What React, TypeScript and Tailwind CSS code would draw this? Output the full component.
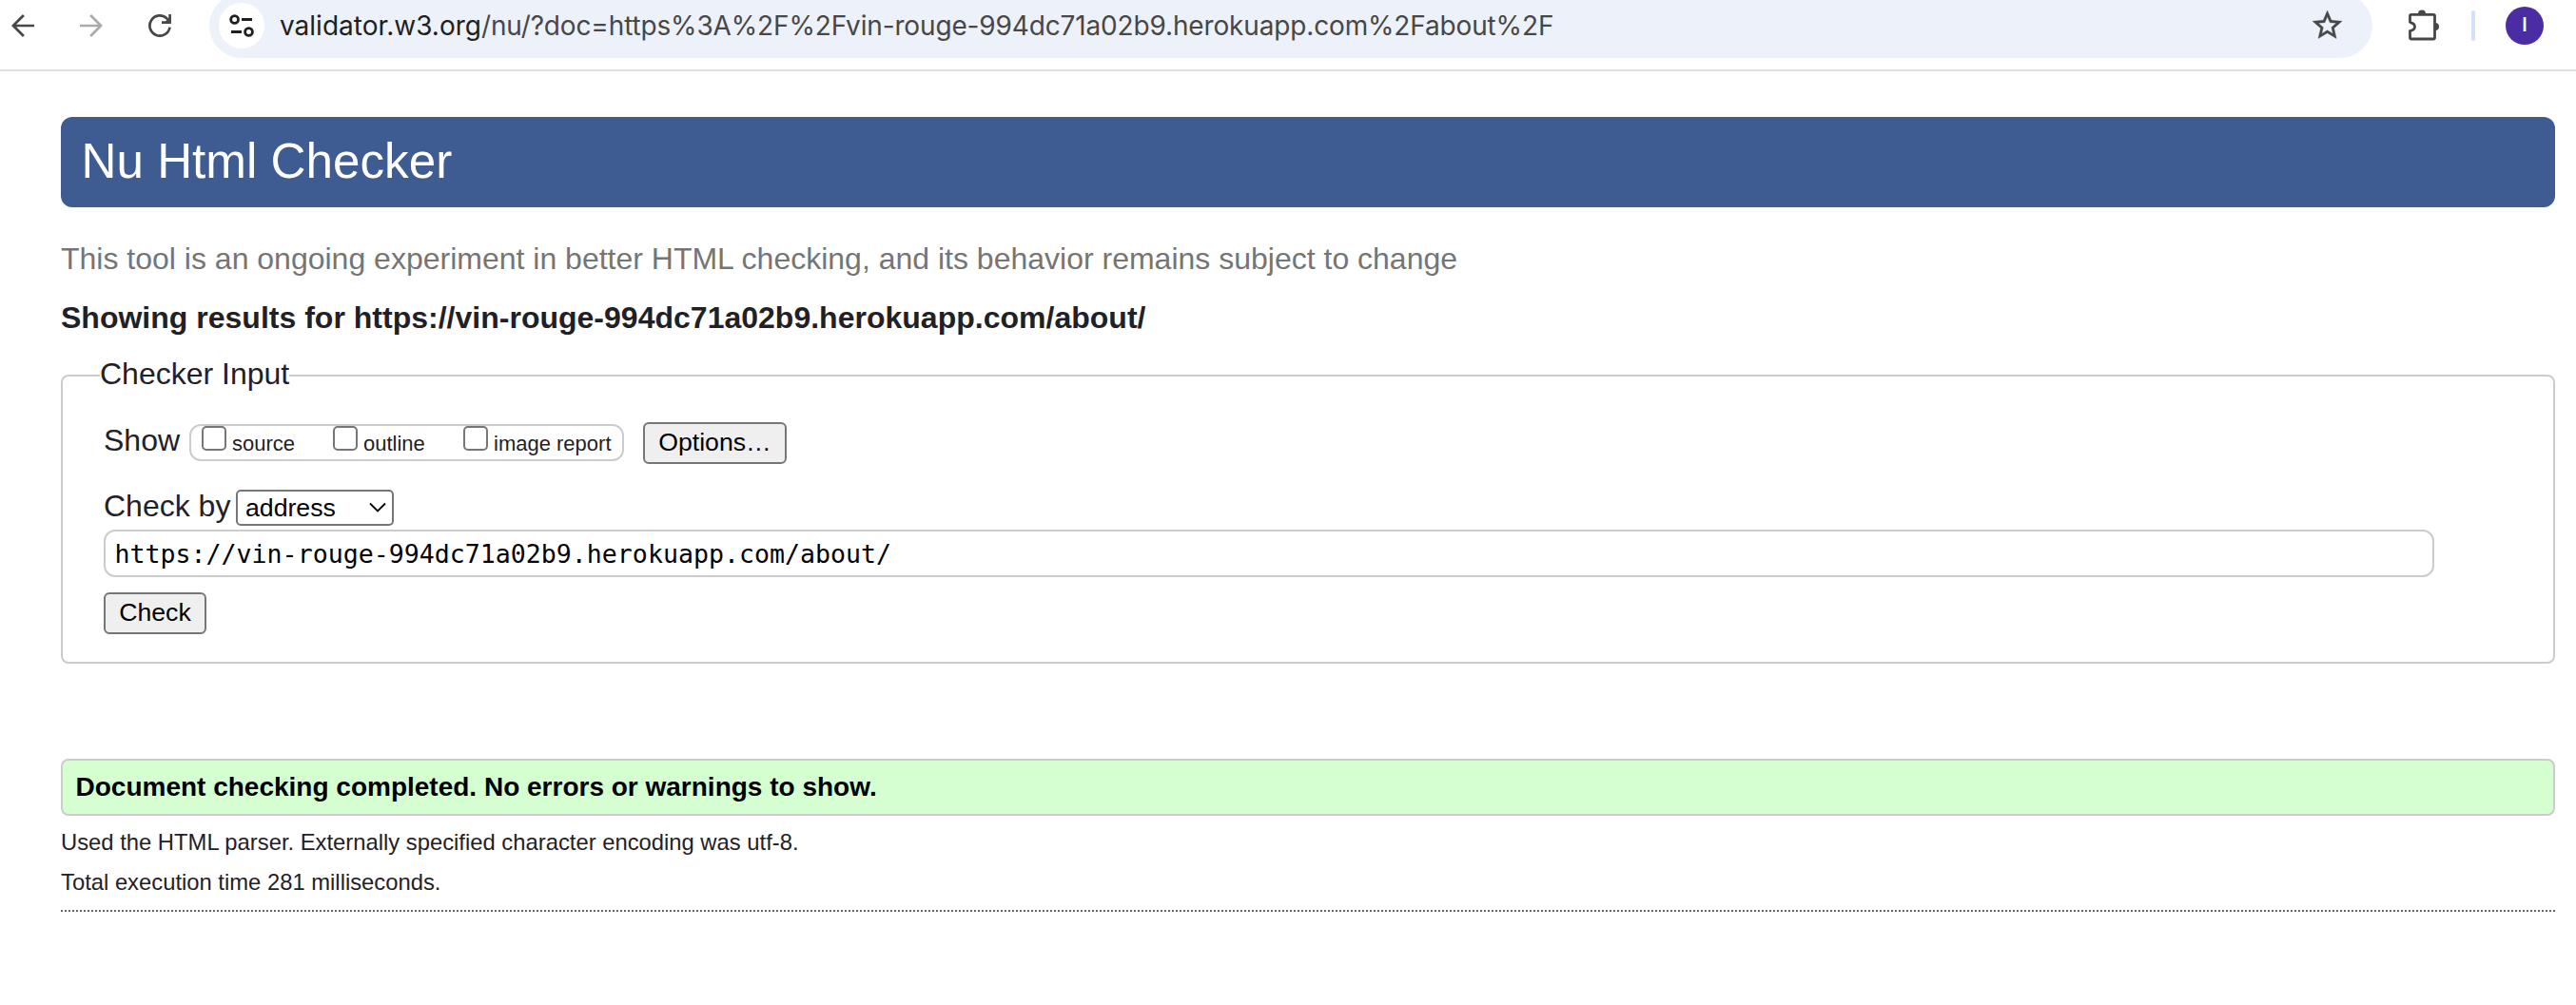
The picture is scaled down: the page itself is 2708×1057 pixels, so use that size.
import React from "react";

function BackIcon({ className }: { className: string }) {
  return (
    <svg viewBox="0 0 24 24" className={className} fill="none" stroke="currentColor" strokeWidth="2.7">
      <path d="M24 12H2M12.9 1L1.9 12l11 11" />
    </svg>
  );
}

function ReloadIcon() {
  return (
    <svg viewBox="0 0 24 24" className="ml-12 size-6 shrink-0 text-[#474747]" fill="none" stroke="currentColor" strokeWidth="2.7">
      <path d="M22.5 13.6A10.6 10.6 0 1 1 19.6 4.6L22 7.4" />
      <path d="M22.6 0V8.6H14" />
      <path d="M22 3.5V8.5H17z" fill="currentColor" stroke="none" />
    </svg>
  );
}

function TuneIcon() {
  return (
    <svg viewBox="0 0 48 48" className="size-12" fill="none" stroke="#1f1f1f" strokeWidth="2.8">
      <circle cx="16.6" cy="17.5" r="3.9" />
      <path d="M24 17.5H35M13 30.5H24" />
      <circle cx="31.5" cy="30.5" r="3.9" />
    </svg>
  );
}

function StarIcon() {
  return (
    <svg viewBox="0 0 24 24" className="mr-[29px] size-[37.2px]" fill="#474747" stroke="#474747" strokeWidth="0.25">
      <path d="M22 9.24l-7.19-.62L12 2 9.19 8.63 2 9.24l5.46 4.73L5.82 21 12 17.27 18.18 21l-1.63-7.03L22 9.24zM12 15.4l-3.76 2.27 1-4.28-3.32-2.88 4.38-.38L12 6.1l1.71 4.04 4.38.38-3.32 2.88 1 4.28L12 15.4z" />
    </svg>
  );
}

function PuzzleIcon() {
  return (
    <svg viewBox="0 0 34 34" className="ml-[37px] size-[34px]" fill="none" stroke="#474747" strokeWidth="2.8">
      <path d="M2.5 14.2V6.8Q2.5 5.4 3.9 5.4H27.1Q28.5 5.4 28.5 6.8V29.6Q28.5 31 27.1 31H3.9Q2.5 31 2.5 29.6V22.6C5.6 21.8 7.5 20.4 7.5 18.2S5.6 14.2 2.5 13.6" />
      <path d="M11 4.5a4 4 0 0 1 8 0zM29 14a4 4 0 0 1 0 8z" fill="#474747" stroke="none" />
    </svg>
  );
}

function Toolbar() {
  return (
    <div className="flex h-[75px] items-start overflow-hidden border-b-2 border-[#e1e1e1]">
      <div className="flex h-[54px] w-full items-center">
        <BackIcon className="ml-3 size-6 shrink-0 text-[#474747]" />
        <BackIcon className="ml-12 size-6 shrink-0 rotate-180 text-[#ababab]" />
        <ReloadIcon />
        <div className="ml-10 flex h-[68px] w-[2274px] shrink-0 items-center rounded-full bg-[#edf2fa] pl-2.5">
          <span className="flex size-12 items-center justify-center rounded-full bg-white">
            <TuneIcon />
          </span>
          <span className="ml-4 flex-1 whitespace-nowrap font-['Inter',sans-serif] text-[28px] leading-[54px] text-[#1f1f1f]">
            validator.w3.org
            <span className="tracking-[-0.15px] text-[#474747]">
              /nu/?doc=https%3A%2F%2Fvin-rouge-994dc71a02b9.herokuapp.com%2Fabout%2F
            </span>
          </span>
          <StarIcon />
        </div>
        <PuzzleIcon />
        <span className="ml-[33px] h-8 w-1 rounded-full bg-[#d3e1fb]" />
        <span className="ml-8 flex size-10 items-center justify-center rounded-full bg-[#4c2ca3] font-['Roboto',sans-serif] text-[21px] font-medium text-white">
          I
        </span>
      </div>
    </div>
  );
}

const boxes = [
  { label: "source", place: "ml-[11px] w-[99px]" },
  { label: "outline", place: "ml-[39px] w-[98px]" },
  { label: "image report", place: "ml-[39px] w-[155px]" },
];

function ShowRow() {
  return (
    <div className="mt-[25px] flex items-start">
      <span className="w-[90px] text-[32px] leading-[38px]">Show</span>
      <div className="mt-[2px] flex h-[39px] w-[457px] rounded-xl border-2 border-[#ccc]">
        {boxes.map((b) => (
          <label key={b.label} className={`flex shrink-0 whitespace-nowrap ${b.place}`}>
            <input type="checkbox" className="size-[26px] shrink-0 appearance-none rounded-[5px] border-2 border-[#767676] bg-white" />
            <span className="ml-1.5 text-[22px] leading-[37px]">{b.label}</span>
          </label>
        ))}
      </div>
      <button className="ml-5 h-11 w-[151px] rounded-md border-2 border-[#767676] bg-[#efefef] pb-0.5 text-[26.67px] leading-[38px] text-black">
        Options…
      </button>
    </div>
  );
}

export default function App() {
  return (
    <div className="h-[1057px] overflow-hidden bg-white font-['Liberation_Sans',Arial,sans-serif] text-[#1f2126]">
      <Toolbar />
      <main className="ml-16 mr-[22px]">
        <h1 className="mt-12 h-[95px] rounded-xl bg-[#3e5c91] pl-[21.5px] text-[51.2px] leading-[94px] text-white">
          Nu Html Checker
        </h1>
        <p className="mt-[30px] text-[32px] leading-[48px] text-[#757575]">
          This tool is an ongoing experiment in better HTML checking, and its behavior remains subject to change
        </p>
        <h2 className="mt-3.5 text-[32px] font-bold leading-[48px] tracking-[0.01px]">
          Showing results for https://vin-rouge-994dc71a02b9.herokuapp.com/about/
        </h2>
        <fieldset className="mt-[13px] h-[327px] rounded-lg border-2 border-[#ccc] pl-[43px]">
          <legend className="-ml-[4px] pb-[3px] text-[32px] leading-[45px]">Checker Input</legend>
          <ShowRow />
          <div className="mt-[27px] flex items-start">
            <span className="w-[139px] text-[32px] leading-[34px]">Check by</span>
            <span className="flex h-[38px] w-[166px] items-center rounded-[5px] border-2 border-[#767676] pl-2 text-[26.67px] leading-[34px] text-black">
              <span className="w-[130px]">address</span>
              <svg viewBox="0 0 18 12" className="h-3 w-[18px]" fill="none" stroke="black" strokeWidth="1.8">
                <path d="M1 1.5l8 8 8-8" />
              </svg>
            </span>
          </div>
          <input
            type="text"
            readOnly
            value="https://vin-rouge-994dc71a02b9.herokuapp.com/about/"
            className="mt-1 block h-[50px] w-[2450px] rounded-xl border-2 border-[#ccc] px-[9.5px] font-['DejaVu_Sans_Mono',monospace] text-[26.6px] text-black"
          />
          <button className="mt-4 block h-11 w-[108px] rounded-md border-2 border-[#767676] bg-[#efefef] pb-0.5 text-[26.67px] leading-[38px] text-black">
            Check
          </button>
        </fieldset>
        <p className="mt-[100px] h-[60px] rounded-lg border-2 border-[#ccc] bg-[#d5ffd0] pl-[13.5px] text-[28px] font-bold leading-[55px] text-black">
          Document checking completed. No errors or warnings to show.
        </p>
        <p className="mt-[7px] text-[23.8px] leading-[42px]">
          Used the HTML parser. Externally specified character encoding was utf-8.
        </p>
        <p className="text-[23.8px] leading-[42px]">Total execution time 281 milliseconds.</p>
        <hr className="mt-2 h-0.5 border-0 bg-[repeating-linear-gradient(90deg,#666_0_2px,transparent_2px_4px)]" />
      </main>
    </div>
  );
}
